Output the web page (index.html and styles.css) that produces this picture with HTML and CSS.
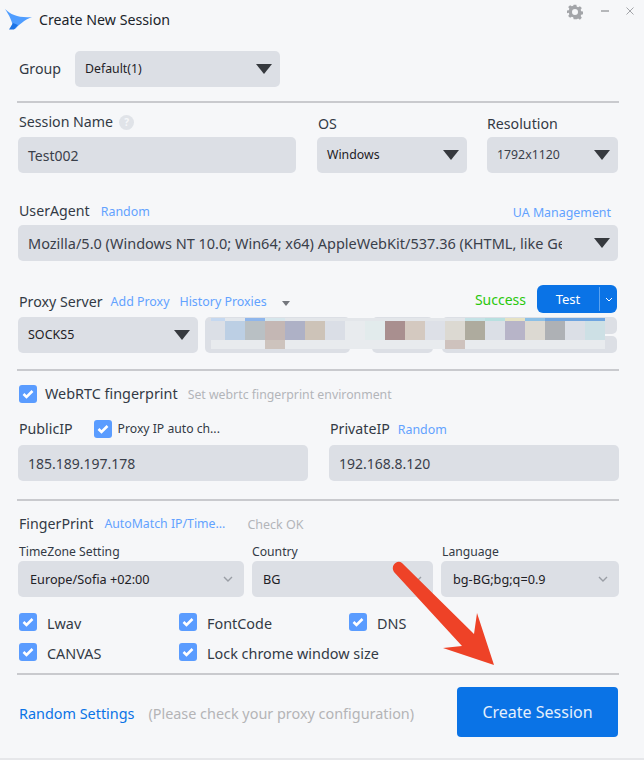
FILE: index.html
```html
<!DOCTYPE html>
<html lang="en">
<head>
<meta charset="utf-8">
<title>Create New Session</title>
<link rel="stylesheet" href="styles.css">
</head>
<body>
<div class="page">
  <header class="titlebar">
    <svg class="logo" width="28" height="21" viewBox="0 0 28 21"><path fill="#4f9dff" d="M0 0C6 6 14 9 27 8C19 11 14 16 10 20L8 20C8 13 4 6 0 0Z"/><path fill="#1c74e6" d="M4 20.500L8 14L13 16L9 20.500Z"/></svg>
    <span class="title">Create New Session</span>
    <span class="controls">
      <svg class="gear" width="16" height="16" viewBox="0 0 24 24"><path fill="#a3a5a9" fill-rule="evenodd" d="M10 1h4l.7 3.100 2 .8 2.700-1.700 2.800 2.800-1.700 2.700.8 2 3.100.7v4l-3.100.7-.8 2 1.700 2.700-2.800 2.800-2.700-1.700-2 .8L14 23h-4l-.7-3.100-2-.8-2.700 1.700-2.800-2.800 1.700-2.700-.8-2L-.4 14v-4l3.100-.7.8-2L1.800 4.600l2.800-2.800 2.700 1.700 2-.8zM12 7.500a4.500 4.500 0 1 0 0 9 4.500 4.500 0 0 0 0-9z"/></svg>
      <span class="minimize"></span>
      <svg class="close" width="8" height="8" viewBox="0 0 8 8"><path d="M.5.500l7 7M7.500.500l-7 7" stroke="#a3a5a9" stroke-width="1" fill="none"/></svg>
    </span>
  </header>

  <div class="group-row">
    <span class="label group-label">Group</span>
    <div class="control control-group"><span class="value small dark">Default(1)</span><i class="caret"></i></div>
  </div>
  <hr class="divider d1">

  <div class="session-grid">
    <div class="cell">
      <div class="head"><span class="label">Session Name</span><span class="help">?</span></div>
      <div class="control"><span class="value">Test002</span></div>
    </div>
    <div class="cell">
      <div class="head low"><span class="label">OS</span></div>
      <div class="control"><span class="value small dark">Windows</span><i class="caret"></i></div>
    </div>
    <div class="cell cell-res">
      <div class="head low"><span class="label">Resolution</span></div>
      <div class="control"><span class="value small">1792x1120</span><i class="caret"></i></div>
    </div>
  </div>

  <div class="ua-head">
    <span class="label">UserAgent</span><a class="link ua-random">Random</a>
    <a class="link ua-manage">UA Management</a>
  </div>
  <div class="control control-ua"><span class="value clip">Mozilla/5.0 (Windows NT 10.0; Win64; x64) AppleWebKit/537.36 (KHTML, like Gecko)</span><i class="caret"></i></div>

  <div class="proxy-head">
    <span class="label proxy-label">Proxy Server</span><a class="link proxy-add">Add Proxy</a><a class="link proxy-history">History Proxies</a><i class="mini-caret"></i>
    <span class="success">Success</span>
    <div class="test-btn"><span class="test-text">Test</span><span class="test-arrow"><svg width="8" height="5" viewBox="0 0 8 5"><path d="M1 1l3 3 3-3" stroke="#fff" fill="none"/></svg></span></div>
  </div>
  <div class="proxy-row">
    <div class="control control-socks"><span class="value small dark socks">SOCKS5</span><i class="caret"></i></div>
    <div class="control blank b1"></div>
    <div class="control blank b2"></div>
    <div class="blank-wrap">
      <div class="control blank b3"></div>
      <div class="spin"><span></span><span></span></div>
    </div>
    <div class="mosaic"><div class="m-top"></div><div class="m-mid"></div><div class="m-low"></div></div>
  </div>
  <hr class="divider d2">

  <div class="webrtc-row">
    <span class="check"><svg width="12" height="10" viewBox="0 0 12 10"><path d="M1.500 5l3 3 6-6" stroke="#fff" stroke-width="2.600" fill="none"/></svg></span>
    <span class="label webrtc">WebRTC fingerprint</span>
    <span class="hint">Set webrtc fingerprint environment</span>
  </div>

  <div class="ip-grid">
    <div class="cell">
      <div class="head ip-head"><span class="label">PublicIP</span>
        <span class="check check-ip"><svg width="12" height="10" viewBox="0 0 12 10"><path d="M1.500 5l3 3 6-6" stroke="#fff" stroke-width="2.600" fill="none"/></svg></span>
        <span class="auto">Proxy IP auto ch...</span></div>
      <div class="control"><span class="value">185.189.197.178</span></div>
    </div>
    <div class="cell">
      <div class="head ip-head"><span class="label">PrivateIP</span><a class="link private-random">Random</a></div>
      <div class="control"><span class="value">192.168.8.120</span></div>
    </div>
  </div>
  <hr class="divider d3">

  <div class="fp-head">
    <span class="label">FingerPrint</span><a class="link fp-auto">AutoMatch IP/Time...</a><span class="check-ok">Check OK</span>
  </div>
  <div class="fp-grid">
    <div class="cell">
      <div class="fp-label">TimeZone Setting</div>
      <div class="control"><span class="value fp-value">Europe/Sofia +02:00</span><svg class="chev" width="10" height="6" viewBox="0 0 10 6"><path d="M1 1l4 4 4-4" stroke="#9a9ea5" stroke-width="1.400" fill="none"/></svg></div>
    </div>
    <div class="cell cell-country">
      <div class="fp-label">Country</div>
      <div class="control"><span class="value fp-value">BG</span><svg class="chev" width="10" height="6" viewBox="0 0 10 6"><path d="M1 1l4 4 4-4" stroke="#9a9ea5" stroke-width="1.400" fill="none"/></svg></div>
    </div>
    <div class="cell">
      <div class="fp-label">Language</div>
      <div class="control"><span class="value fp-value">bg-BG;bg;q=0.9</span><svg class="chev" width="10" height="6" viewBox="0 0 10 6"><path d="M1 1l4 4 4-4" stroke="#9a9ea5" stroke-width="1.400" fill="none"/></svg></div>
    </div>
  </div>

  <div class="checks">
    <label class="opt"><span class="check"><svg width="12" height="10" viewBox="0 0 12 10"><path d="M1.500 5l3 3 6-6" stroke="#fff" stroke-width="2.600" fill="none"/></svg></span><span class="label">Lwav</span></label>
    <label class="opt"><span class="check"><svg width="12" height="10" viewBox="0 0 12 10"><path d="M1.500 5l3 3 6-6" stroke="#fff" stroke-width="2.600" fill="none"/></svg></span><span class="label">FontCode</span></label>
    <label class="opt"><span class="check"><svg width="12" height="10" viewBox="0 0 12 10"><path d="M1.500 5l3 3 6-6" stroke="#fff" stroke-width="2.600" fill="none"/></svg></span><span class="label">DNS</span></label>
    <label class="opt"><span class="check"><svg width="12" height="10" viewBox="0 0 12 10"><path d="M1.500 5l3 3 6-6" stroke="#fff" stroke-width="2.600" fill="none"/></svg></span><span class="label">CANVAS</span></label>
    <label class="opt opt-wide"><span class="check"><svg width="12" height="10" viewBox="0 0 12 10"><path d="M1.500 5l3 3 6-6" stroke="#fff" stroke-width="2.600" fill="none"/></svg></span><span class="label">Lock chrome window size</span></label>
  </div>
  <hr class="divider d4">

  <footer class="footer">
    <a class="random-settings">Random Settings</a>
    <span class="note">(Please check your proxy configuration)</span>
    <button class="create">Create Session</button>
  </footer>

  <svg class="arrow" width="644" height="760" viewBox="0 0 644 760"><path fill="#ee4227" d="M402 563L474 634L477 613L494 665L443 648L462 646L394 572C390 566 397 559 402 563Z"/></svg>
</div>
</body>
</html>
```
FILE: styles.css
```css
* { box-sizing: border-box; }
html, body { margin: 0; padding: 0; }
body { background: #f6f7f9; font-family: "Noto Sans", "Open Sans", sans-serif; color: #333a45; }
.page { position: relative; width: 644px; height: 760px; overflow: hidden; border-bottom: 2px solid #e6e7ea; }

.titlebar { display: flex; align-items: center; height: 40px; padding: 0 10px 2px 5px; }
.logo { margin-right: 6px; }
.title { font-size: 14.200px; color: #20242a; }
.controls { display: flex; align-items: center; gap: 17px; margin-left: auto; margin-bottom: 16px; }
.gear { margin-top: 1px; margin-right: 1px; }
.minimize { width: 8px; height: 2px; background: #b5b7ba; }

.label { font-size: 14.200px; line-height: 20px; color: #333a45; white-space: nowrap; }
.link { font-size: 12.400px; line-height: 18px; color: #62a2ff; white-space: nowrap; }
.value { font-size: 14px; color: #3a404a; white-space: nowrap; }
.value.small { font-size: 12.300px; padding-bottom: 2px; }
.value.dark { color: #1e2126; }
.fp-value { font-size: 12.700px; color: #1e2126; }
.clip { overflow: hidden; flex: none; }

.control { display: flex; align-items: center; height: 36px; padding: 0 8px 0 10px; background: #dcdfe5; border-radius: 5px; }
.caret { flex: none; margin-left: auto; width: 0; height: 0; border-left: 8px solid transparent; border-right: 8px solid transparent; border-top: 10px solid #36393e; }
.chev { flex: none; margin-left: auto; margin-right: 3px; }

.divider { border: 0; height: 2px; margin: 0 25px 0 17px; background: #c9cace; }

.group-row { display: flex; align-items: center; margin: 11px 0 0 19px; }
.group-label { width: 56px; }
.control-group { width: 205px; }
.d1 { margin-top: 14px; }

.session-grid { display: grid; grid-template-columns: 278px 150px 130px; column-gap: 21px; margin-left: 18px; }
.cell-res { margin-left: -1px; }
.cell-res .head { padding-left: 0; }
.head { display: flex; align-items: center; gap: 6px; height: 34px; padding: 4px 0 0 1px; }
.head.low { padding-top: 7px; }
.help { display: inline-flex; align-items: center; justify-content: center; width: 15px; height: 15px; border-radius: 50%; background: #e0e3e8; color: #f6f7f9; font-size: 10px; font-weight: 700; }

.ua-head { display: flex; align-items: center; height: 52px; padding: 24px 33px 0 19px; }
.ua-random { margin-left: 11px; margin-top: 2px; }
.ua-manage { margin-left: auto; margin-top: 4px; }
.control-ua { width: 600px; margin-left: 18px; }
.control-ua .value { width: 534px; font-size: 14.500px; }

.proxy-head { display: flex; align-items: center; height: 56px; padding: 24px 27px 4px 19px; }
.proxy-label { margin-top: 6px; }
.proxy-add { margin: 6px 0 0 8px; }
.proxy-history { margin: 6px 0 0 10px; }
.mini-caret { width: 0; height: 0; margin: 8px 0 0 15px; border-left: 4px solid transparent; border-right: 4px solid transparent; border-top: 5px solid #74777d; }
.success { margin-left: auto; margin-right: 11px; font-size: 14px; color: #2ac70c; }
.test-btn { display: flex; align-items: center; width: 80px; height: 28px; border-radius: 6px; background: #0a73e6; color: #fff; font-size: 13px; }
.test-text { width: 62px; text-align: center; }
.test-arrow { display: flex; align-items: center; justify-content: center; flex: 1; height: 24px; border-left: 1px solid #5aa2f0; }

.proxy-row { position: relative; display: flex; margin-left: 18px; width: 599px; }
.control-socks { width: 180px; margin-right: 7px; }
.value.socks { font-size: 12.500px; }
.blank { padding: 0; }
.b1 { width: 145px; margin-right: 22px; }
.b2 { width: 61px; margin-right: 9px; }
.blank-wrap { display: flex; flex: 1; }
.b3 { flex: 1; border-radius: 5px 0 0 5px; }
.spin { display: flex; flex-direction: column; justify-content: space-between; width: 12px; }
.spin span { height: 17px; background: #dcdfe5; border-radius: 0 5px 5px 0; }

.mosaic { position: absolute; left: 187px; top: 1px; width: 400px; height: 31px; display: flex; flex-direction: column; }
.m-top { height: 3px; margin-left: 6px; background: linear-gradient(90deg, #c5d8f0 0 14px, #e3e7ec 14px 34px, #8fb6ec 34px 54px, #d7e6ec 54px 74px, #e3e6ea 74px 254px, #c5e2e6 254px 274px, #b8e0e0 274px 294px, #e6e2c4 294px 314px, #8cc0e6 314px 334px, #6fa5e0 334px 394px); }
.m-mid { height: 20px; background: linear-gradient(90deg, #dbdfe6 0 20px, #bccfe4 20px 40px, #b9c0c4 40px 60px, #c4b7b4 60px 80px, #aeb1c6 80px 100px, #cdc3b8 100px 120px, #dadee6 120px 140px, #e8ebee 140px 160px, #e2ebec 160px 180px, #a98f8f 180px 200px, #d4c9c0 200px 220px, #dde0e7 220px 240px, #dcd9d2 240px 260px, #aeab9e 260px 280px, #dbdfe6 280px 300px, #b7b4c8 300px 320px, #dcd9d2 320px 340px, #aeb1b5 340px 360px, #dbdfe6 360px 380px, #cde0e5 380px 400px); }
.m-low { height: 9px; margin-left: 6px; width: 394px; background: linear-gradient(90deg, #e8ebee 0 54px, #cdc3bd 54px 74px, #e8ebee 74px 234px, #cec2bd 234px 254px, #e8ebee 254px 394px); }

.d2 { margin-top: 16px; }

.webrtc-row { display: flex; align-items: center; height: 18px; margin: 14px 0 0 19px; }
.check { flex: none; display: inline-flex; align-items: center; justify-content: center; width: 18px; height: 18px; background: #5a9cff; border-radius: 3px; }
.webrtc { margin-left: 8px; font-size: 14.400px; }
.hint { margin-left: 10px; font-size: 12.300px; color: #b3b5b9; white-space: nowrap; }

.ip-grid { display: grid; grid-template-columns: 290px 290px; column-gap: 21px; margin-left: 18px; }
.ip-head { height: 42px; padding-top: 9px; }
.check-ip { margin-left: 15px; }
.auto { font-size: 12.200px; color: #333a45; white-space: nowrap; }
.private-random { margin-left: 2px; margin-top: 2px; }
.d3 { margin-top: 18px; }

.fp-head { display: flex; align-items: center; height: 46px; padding: 0 0 0 19px; }
.fp-auto { margin-left: 11px; font-size: 12.300px; }
.check-ok { margin-left: 22px; font-size: 12.500px; color: #b3b5b9; }

.fp-grid { display: grid; grid-template-columns: 226px 181px 178px; column-gap: 8px; margin-left: 18px; }
.fp-label { height: 14px; margin-top: -2px; margin-bottom: 2px; padding-left: 1px; font-size: 12.200px; line-height: 14px; color: #333a45; white-space: nowrap; }
.cell-country .fp-label { padding-left: 0; }
.fp-grid .control { padding-left: 12px; }
.fp-grid .cell-country .control { padding-left: 11px; }

.checks { display: grid; grid-template-columns: 160px 170px 100px; row-gap: 12px; margin: 16px 0 0 19px; }
.opt { display: flex; align-items: center; gap: 10px; height: 18px; }
.opt .label { padding-top: 4px; font-size: 14.400px; }
.opt-wide { grid-column: span 2; }
.d4 { margin-top: 12px; }

.footer { display: flex; align-items: center; height: 50px; margin: 12px 26px 0 19px; }
.random-settings { padding-top: 2px; font-size: 14.400px; color: #0a73e6; }
.note { padding-top: 2px; margin-left: 14px; font-size: 14.400px; color: #b4b4b6; white-space: nowrap; }
.create { margin-left: auto; flex: none; width: 161px; height: 50px; border: 0; border-radius: 4px; background: #0a73e6; color: #e4effc; font: inherit; font-size: 16px; }

.arrow { position: absolute; left: 0; top: 0; pointer-events: none; }
```
